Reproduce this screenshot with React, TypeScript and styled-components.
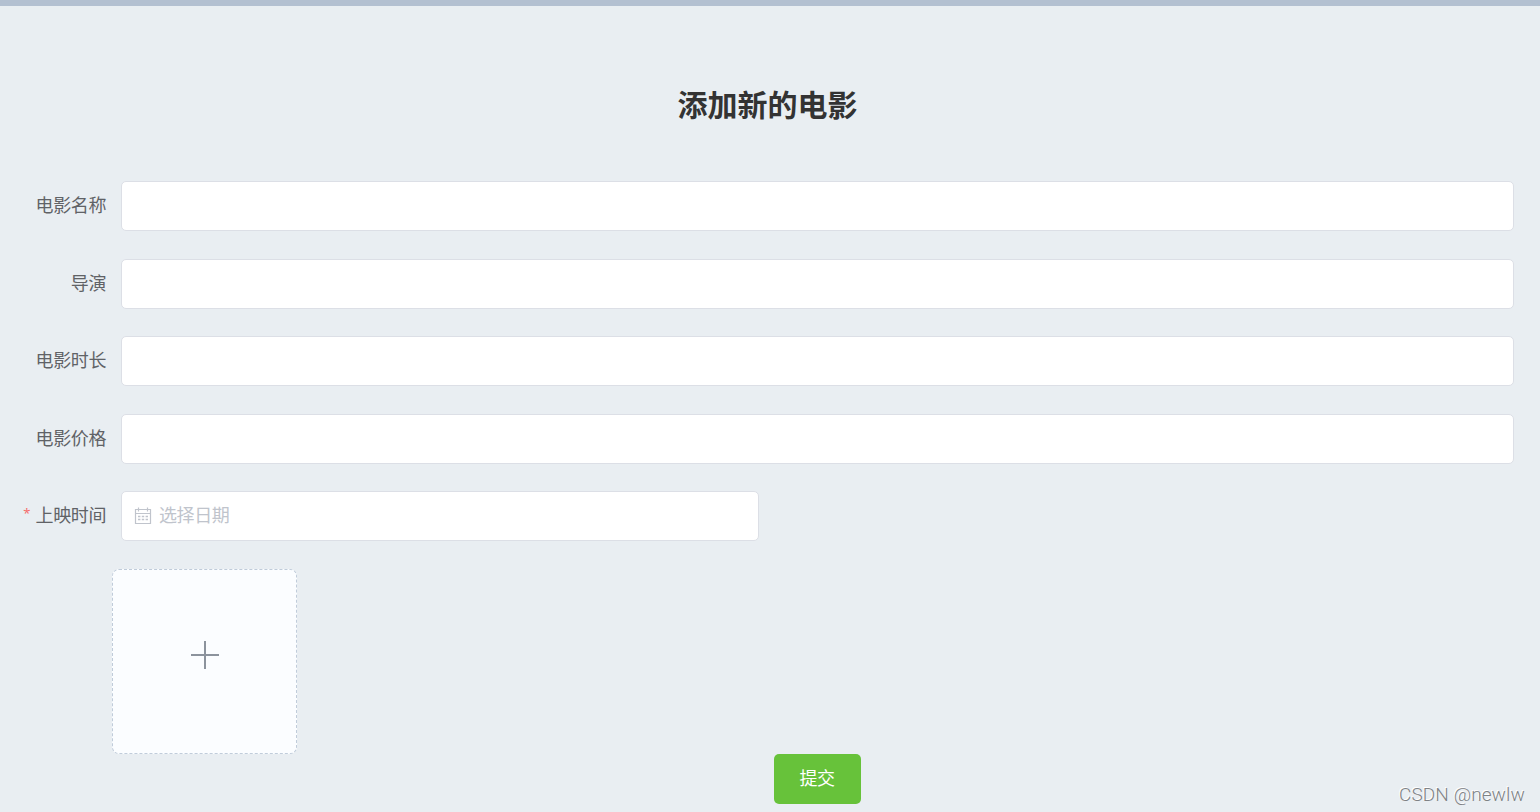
import React from 'react';
import styled, { createGlobalStyle } from 'styled-components';

const GlobalStyle = createGlobalStyle`
  * { box-sizing: border-box; }
  body {
    margin: 0;
    background: #e9eef2;
    color: #333;
    font-family: "Liberation Sans", "Noto Sans CJK SC", sans-serif;
    overflow: hidden;
  }
`;

const Page = styled.div`
  height: 812px;
  border-top: 6px solid #b3c0d1;
  padding: 75px 26px 0 0;
  overflow: hidden;
`;

const Title = styled.h1`
  margin: 0 0 50px;
  padding-right: 5px;
  width: 1540px;
  height: 50px;
  font-size: 30px;
  line-height: 50px;
  text-align: center;
`;

const Form = styled.form`
  display: flex;
  flex-direction: column;
`;

const Row = styled.div`
  display: flex;
  height: 50px;
  margin-bottom: 27.5px;
`;

const Label = styled.label<{ $required?: boolean }>`
  display: flex;
  justify-content: flex-end;
  width: 121px;
  padding-right: 15px;
  flex: none;
  font-family: "Noto Sans CJK SC", sans-serif;
  font-size: 18px;
  letter-spacing: -0.4px;
  line-height: 46px;
  color: #606266;
  &::before {
    content: ${p => (p.$required ? '"*"' : 'none')};
    margin-right: 5.5px;
    font-family: "Noto Sans", sans-serif;
    font-size: 13px;
    line-height: 45px;
    color: #f56c6c;
  }
`;

const Input = styled.input`
  flex: 1;
  min-width: 0;
  height: 50px;
  border: 1px solid #dcdfe6;
  border-radius: 5px;
  background: #fff;
  padding: 0 18px;
  font-size: 17.5px;
  outline: none;
`;

const DateField = styled.div`
  display: flex;
  align-items: center;
  width: 638px;
  height: 50px;
  padding: 0 12px 1px;
  gap: 7px;
  border: 1px solid #dcdfe6;
  border-radius: 5px;
  background: #fff;
  color: #c0c4cc;
  font-family: "Noto Sans CJK SC", sans-serif;
  font-size: 18px;
  letter-spacing: -0.4px;
  line-height: 44px;
  svg { display: block; flex: none; }
  span { padding-bottom: 4px; }
`;

const Upload = styled.div`
  display: flex;
  align-items: center;
  justify-content: center;
  width: 185px;
  height: 185px;
  margin-left: 112px;
  padding-bottom: 14px;
  border: 1px dashed #c0ccda;
  border-radius: 7px;
  background: #fbfdff;
`;

const Submit = styled.button`
  width: 87px;
  height: 50px;
  margin-left: 774px;
  padding: 0 1px 3px 0;
  border: 0;
  border-radius: 5px;
  background: #67c23a;
  color: #fff;
  font-family: "Noto Sans CJK SC", sans-serif;
  font-size: 18px;
  letter-spacing: -0.4px;
  line-height: 47px;
`;

const Watermark = styled.div`
  position: absolute;
  left: 1399px;
  top: 784px;
  font-family: Roboto, sans-serif;
  font-size: 19px;
  font-weight: 300;
  letter-spacing: 0.1px;
  line-height: 22px;
  white-space: nowrap;
  color: #7f8285;
  text-shadow: -1px -1px 0 #fff;
`;

const CalendarIcon = () => (
  <svg width="18" height="18" viewBox="0 0 18 18" fill="none" stroke="#c0c4cc" strokeWidth="1.2">
    <path d="M1.5 2.5h15v14h-15zM1.5 6.5h15M4.5 .5v4M13.5 .5v4" />
    <path d="M4 9.5h10M4 12.5h10" strokeWidth="1.3" strokeDasharray="2.4 1.4" />
  </svg>
);

const PlusIcon = () => (
  <svg width="29" height="29" viewBox="0 0 29 29" stroke="#8c939d" strokeWidth="2">
    <path d="M1 15h28M15 1v28" />
  </svg>
);

const fields = ['电影名称', '导演', '电影时长', '电影价格'];

export default function App() {
  return (
    <Page>
      <GlobalStyle />
      <Title>添加新的电影</Title>
      <Form>
        {fields.map(name => (
          <Row key={name}>
            <Label>{name}</Label>
            <Input aria-label={name} />
          </Row>
        ))}
        <Row>
          <Label $required>上映时间</Label>
          <DateField>
            <CalendarIcon />
            <span>选择日期</span>
          </DateField>
        </Row>
        <Upload>
          <PlusIcon />
        </Upload>
        <Submit type="button">提交</Submit>
      </Form>
      <Watermark>CSDN @newlw</Watermark>
    </Page>
  );
}
